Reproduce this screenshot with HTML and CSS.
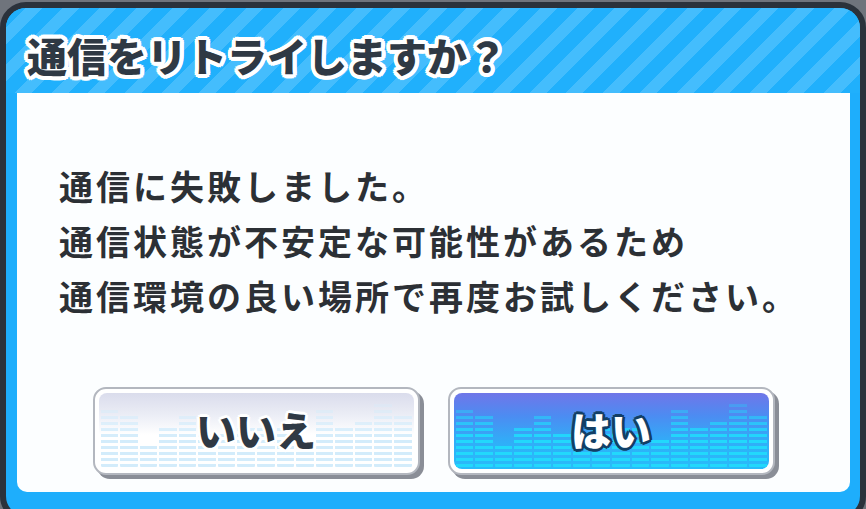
FILE: index.html
```html
<!DOCTYPE html>
<html lang="ja">
<head>
  <meta charset="UTF-8">
  <title>通信をリトライしますか？</title>
  <link rel="stylesheet" href="styles.css">
</head>
<body>

<div class="dialog">
  <!-- header -->
  <div class="dialog-head">
    <h1 class="title">通信をリトライしますか？</h1>
  </div>

  <!-- body -->
  <div class="panel">
    <div class="message">
      <p>通信に失敗しました。</p>
      <p>通信状態が不安定な可能性があるため</p>
      <p>通信環境の良い場所で再度お試しください。</p>
    </div>

    <div class="buttons">
      <button class="btn btn-no">
        <span class="face">
          <span class="bars">
            <i style="height:58px"></i><i style="height:52px"></i><i style="height:22px"></i><i style="height:40px"></i>
            <i style="height:52px"></i><i style="height:34px"></i><i style="height:34px"></i><i style="height:40px"></i>
            <i style="height:40px"></i><i style="height:40px"></i><i style="height:28px"></i><i style="height:58px"></i>
            <i style="height:40px"></i><i style="height:46px"></i><i style="height:64px"></i><i style="height:52px"></i>
          </span>
          <span class="label">いいえ</span>
        </span>
      </button>
      <button class="btn btn-yes">
        <span class="face">
          <span class="bars">
            <i style="height:58px"></i><i style="height:52px"></i><i style="height:22px"></i><i style="height:40px"></i>
            <i style="height:52px"></i><i style="height:34px"></i><i style="height:34px"></i><i style="height:40px"></i>
            <i style="height:40px"></i><i style="height:40px"></i><i style="height:28px"></i><i style="height:58px"></i>
            <i style="height:40px"></i><i style="height:46px"></i><i style="height:64px"></i><i style="height:52px"></i>
          </span>
          <span class="label">はい</span>
        </span>
      </button>
    </div>
  </div>
</div>

</body>
</html>
```

FILE: styles.css
```css
html, body {
  margin: 0;
  padding: 0;
  height: 100%;
  overflow: hidden;
}

body {
  background-color: #6f747c;
  font-family: "Noto Sans CJK JP", "Noto Sans", sans-serif;
}

.dialog {
  margin-top: 2px;
  height: 520px;
  box-sizing: border-box;
  border: 6px solid #2b323b;
  border-radius: 26px;
  background-color: #1eaefc;
  display: flex;
  flex-direction: column;
  overflow: hidden;
}

.dialog-head {
  height: 85px;
  flex: none;
  box-sizing: border-box;
  padding: 8px 0 0 21px;
  display: flex;
  align-items: center;
  background: repeating-linear-gradient(
    -45deg,
    #20b0fc 0px,
    #20b0fc 14px,
    #44bdfd 14px,
    #44bdfd 26px
  );
}

.title {
  margin: 0;
  font-size: 40px;
  font-weight: 900;
  letter-spacing: 0;
  color: #2f3944;
  line-height: 1;
  text-shadow:
    3px 0 0 #fff, -3px 0 0 #fff, 0 3px 0 #fff, 0 -3px 0 #fff,
    2px 2px 0 #fff, -2px 2px 0 #fff, 2px -2px 0 #fff, -2px -2px 0 #fff,
    4px 1px 0 #fff, -4px 1px 0 #fff, 1px 4px 0 #fff, 1px -4px 0 #fff,
    4px -1px 0 #fff, -4px -1px 0 #fff, -1px 4px 0 #fff, -1px -4px 0 #fff,
    3px 3px 0 #fff, -3px 3px 0 #fff, 3px -3px 0 #fff, -3px -3px 0 #fff;
}

.panel {
  margin: 0 10px 0 11px;
  height: 399px;
  flex: none;
  background-color: #fcfeff;
  border-radius: 0 0 10px 10px;
  display: flex;
  flex-direction: column;
}

.message {
  padding: 65px 0 0 42px;
  color: #2c3035;
  font-size: 34px;
  font-weight: 700;
  letter-spacing: 3px;
}

.message p {
  margin: 0;
  line-height: 55px;
}

.buttons {
  margin-top: 64px;
  display: flex;
  justify-content: center;
  gap: 28px;
}

.btn {
  width: 327px;
  height: 88px;
  box-sizing: border-box;
  padding: 4px;
  border: 2px solid #b3b7bf;
  border-radius: 13px;
  background-color: #fff;
  box-shadow: 4px 4px 0 #8a8e97;
  font-family: inherit;
  cursor: pointer;
}

.face {
  display: block;
  position: relative;
  height: 100%;
  border-radius: 8px;
  overflow: hidden;
}

.bars {
  position: absolute;
  left: 0;
  right: 0;
  bottom: 2px;
  display: flex;
  align-items: flex-end;
  gap: 2px;
  padding: 0 2px;
  -webkit-mask-image: linear-gradient(to top, #000 45%, rgba(0, 0, 0, 0.25) 100%);
  mask-image: linear-gradient(to top, #000 45%, rgba(0, 0, 0, 0.25) 100%);
}

.bars i {
  flex: 1;
  display: block;
  border-radius: 1px;
}

.label {
  position: relative;
  display: flex;
  height: 100%;
  align-items: center;
  justify-content: center;
  font-size: 40px;
  font-weight: 900;
  line-height: 1;
  padding-bottom: 4px;
  box-sizing: border-box;
}

.btn-no .face {
  background: linear-gradient(#dadcec 0%, #eceef6 30%, #ffffff 55%);
}

.btn-no .bars i {
  background: repeating-linear-gradient(
    to top,
    #d3ecfb 0px,
    #d3ecfb 3px,
    transparent 3px,
    transparent 6px
  );
}

.btn-no .label {
  color: #2f3944;
  text-shadow:
    3px 0 0 #fff, -3px 0 0 #fff, 0 3px 0 #fff, 0 -3px 0 #fff,
    2px 2px 0 #fff, -2px 2px 0 #fff, 2px -2px 0 #fff, -2px -2px 0 #fff;
}

.btn-yes .face {
  background: linear-gradient(#7076e8 0%, #4c8cf2 30%, #30aef8 65%, #28bcfa 100%);
}

.btn-yes .bars i {
  background: repeating-linear-gradient(
    to top,
    #22d8fc 0px,
    #22d8fc 3px,
    transparent 3px,
    transparent 6px
  );
}

.btn-yes .label {
  color: #fff;
  text-shadow:
    3px 0 0 #123f66, -3px 0 0 #123f66, 0 3px 0 #123f66, 0 -3px 0 #123f66,
    2px 2px 0 #123f66, -2px 2px 0 #123f66, 2px -2px 0 #123f66, -2px -2px 0 #123f66;
}
```
